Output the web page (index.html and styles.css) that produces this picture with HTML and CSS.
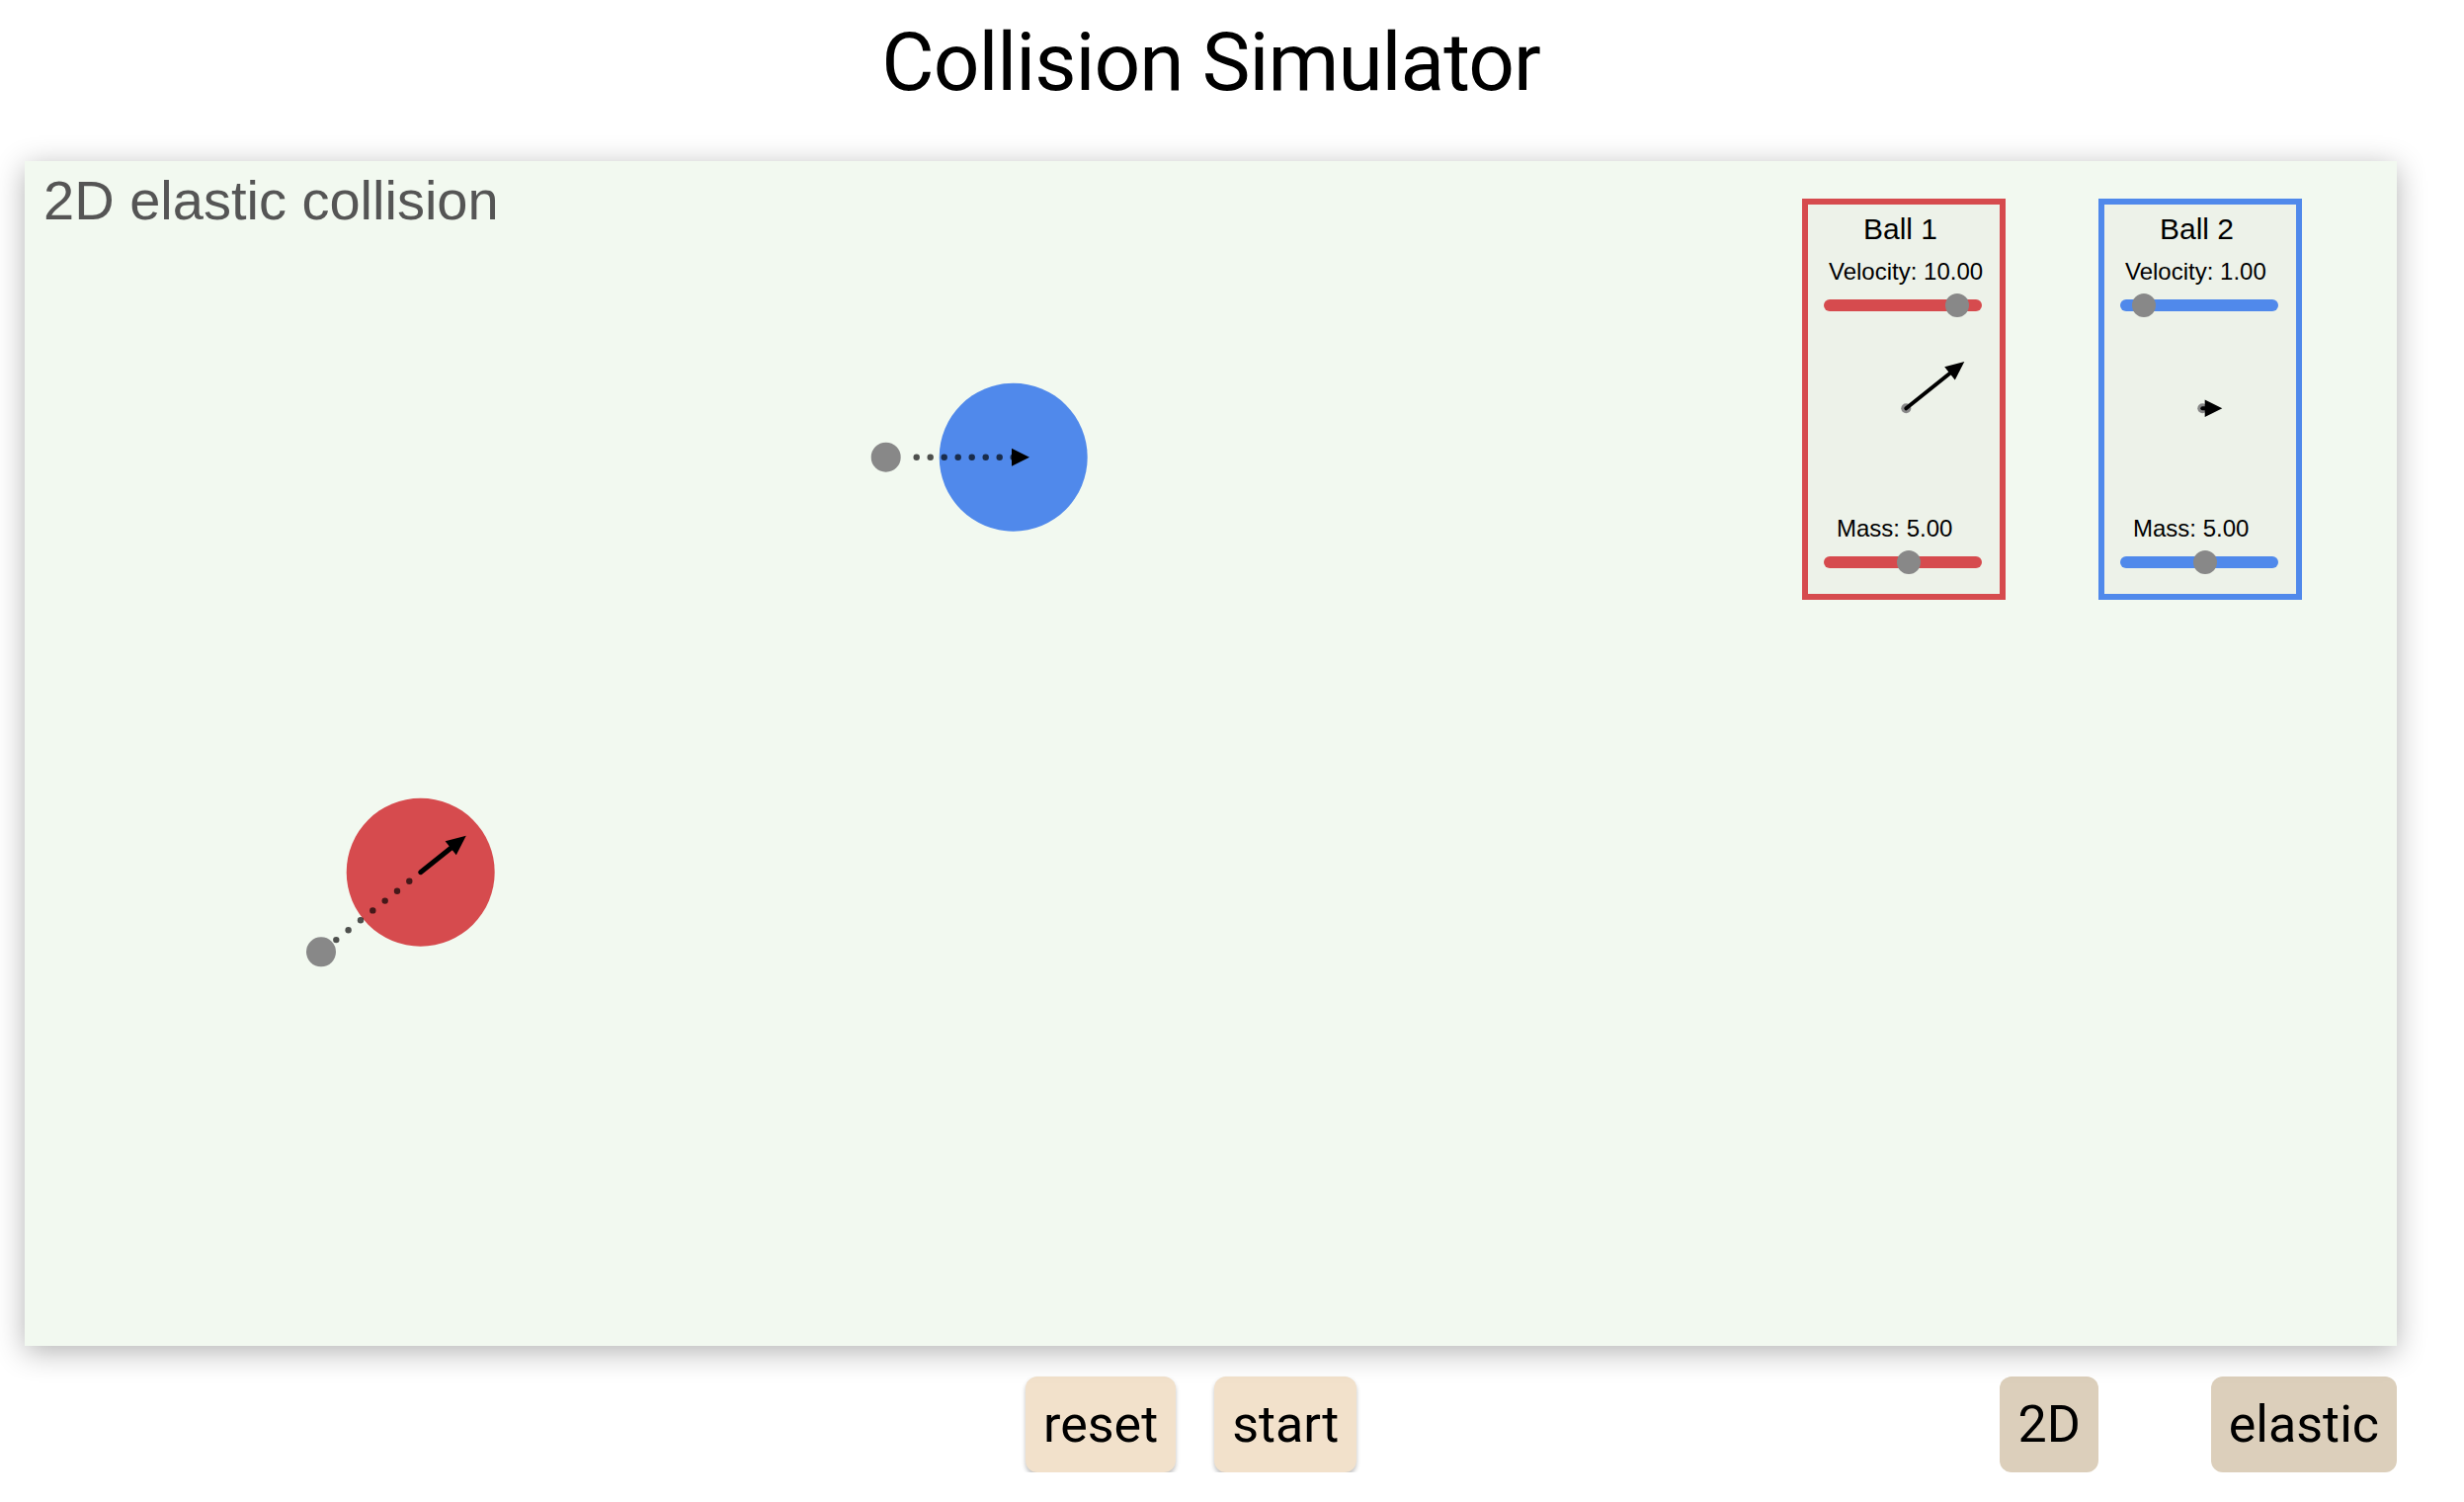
FILE: index.html
```html
<!DOCTYPE html>
<html lang="en">
<head>
<meta charset="utf-8">
<title>Collision Simulator</title>
<link rel="stylesheet" href="styles.css">
</head>
<body>
<div class="app">
  <h1 class="title">Collision Simulator</h1>
  <div class="stage">
    <svg class="scene" width="2401" height="1199" viewBox="0 0 2401 1199">
      <!-- ball 1 (red) -->
      <circle cx="300" cy="800.3" r="15" fill="#888888"/>
      <circle cx="400.7" cy="719.7" r="75" fill="#d64b4e"/>
      <g fill="rgba(0,0,0,0.68)">
        <circle cx="315.3" cy="788.1" r="3.2"/>
        <circle cx="327.6" cy="778.2" r="3.2"/>
        <circle cx="340.0" cy="768.3" r="3.2"/>
        <circle cx="352.3" cy="758.4" r="3.2"/>
        <circle cx="364.7" cy="748.6" r="3.2"/>
        <circle cx="377.0" cy="738.7" r="3.2"/>
        <circle cx="389.3" cy="728.8" r="3.2"/>
      </g>
      <line x1="400.7" y1="719.7" x2="432" y2="694.7" stroke="#000" stroke-width="5" stroke-linecap="round"/>
      <polygon points="446.8,682.8 436.8,702.3 425.6,688.3" fill="#000"/>
      <!-- ball 2 (blue) -->
      <circle cx="871.7" cy="299.7" r="15" fill="#888888"/>
      <circle cx="1000.7" cy="299.7" r="75" fill="#5089eb"/>
      <g fill="rgba(0,0,0,0.68)">
        <circle cx="902.7" cy="299.7" r="3.2"/>
        <circle cx="916.7" cy="299.7" r="3.2"/>
        <circle cx="930.7" cy="299.7" r="3.2"/>
        <circle cx="944.7" cy="299.7" r="3.2"/>
        <circle cx="958.7" cy="299.7" r="3.2"/>
        <circle cx="972.7" cy="299.7" r="3.2"/>
        <circle cx="986.7" cy="299.7" r="3.2"/>
        <circle cx="1000.7" cy="299.7" r="3.2"/>
      </g>
      <polygon points="1017,299.7 999,290.7 999,308.7" fill="#000"/>
    </svg>
    <div class="caption">2D elastic collision</div>
    <div class="panels">
      <div class="panel panel-red">
        <div class="panel-title">Ball 1</div>
        <div class="panel-label label-velocity">Velocity: 10.00</div>
        <div class="slider"><span class="thumb" style="left:135px"></span></div>
        <svg class="vector" width="194" height="206" viewBox="0 0 194 206">
          <circle cx="99.3" cy="98.3" r="5" fill="#888888"/>
          <line x1="99.3" y1="98.3" x2="144" y2="62.5" stroke="#000" stroke-width="4" stroke-linecap="round"/>
          <polygon points="158.3,51 148.8,69.5 138.2,56.3" fill="#000"/>
        </svg>
        <div class="panel-label label-mass">Mass: 5.00</div>
        <div class="slider slider-mass"><span class="thumb" style="left:85.7px"></span></div>
      </div>
      <div class="panel panel-blue">
        <div class="panel-title">Ball 2</div>
        <div class="panel-label label-velocity">Velocity: 1.00</div>
        <div class="slider"><span class="thumb" style="left:24.3px"></span></div>
        <svg class="vector" width="194" height="206" viewBox="0 0 194 206">
          <circle cx="99.3" cy="98.3" r="5" fill="#888888"/>
          <line x1="99.3" y1="98.3" x2="102" y2="98.3" stroke="#000" stroke-width="4" stroke-linecap="round"/>
          <polygon points="119.3,98.3 101.7,89.6 101.7,107" fill="#000"/>
        </svg>
        <div class="panel-label label-mass">Mass: 5.00</div>
        <div class="slider slider-mass"><span class="thumb" style="left:85.7px"></span></div>
      </div>
    </div>
  </div>
  <div class="controls">
    <div class="btn-group primary">
      <button class="btn btn-action">reset</button>
      <button class="btn btn-action">start</button>
    </div>
    <div class="btn-group mode">
      <button class="btn btn-mode">2D</button>
      <button class="btn btn-mode">elastic</button>
    </div>
  </div>
</div>
</body>
</html>
```

FILE: styles.css
```css
html, body {
  margin: 0;
  padding: 0;
  background: #ffffff;
}

body {
  font-family: Roboto, "Liberation Sans", Arial, sans-serif;
  color: #000;
}

.app {
  width: 2401px;
  margin-left: 25px;
}

.title {
  margin: 15px 0 0;
  font-family: Roboto, sans-serif;
  font-weight: 400;
  font-size: 82px;
  letter-spacing: -1px;
  line-height: 96px;
  text-align: center;
  color: #000;
}

.stage {
  position: relative;
  margin-top: 52px;
  width: 2401px;
  height: 1199px;
  background: #f2f9f0;
  box-shadow: 0 6px 28px rgba(0, 0, 0, 0.3);
  display: flex;
  align-items: flex-start;
}

.scene {
  position: absolute;
  left: 0;
  top: 0;
  display: block;
}

.caption {
  position: relative;
  margin: 7.5px 0 0 19px;
  font-family: "Liberation Sans", Arial, sans-serif;
  font-size: 56px;
  line-height: 64px;
  color: #555555;
}

.panels {
  position: relative;
  margin: 38px 96px 0 auto;
  display: flex;
  gap: 94px;
}

.panel {
  box-sizing: border-box;
  width: 206px;
  height: 406px;
  border: 6px solid;
  background: #edf2e9;
  display: flex;
  flex-direction: column;
  align-items: flex-start;
  font-family: "Liberation Sans", Arial, sans-serif;
  color: #000;
}

.panel-red {
  border-color: #d64b4e;
  --track: #d64b4e;
}

.panel-blue {
  border-color: #5089eb;
  --track: #5089eb;
}

.panel-title {
  margin: 8px 0 0 56px;
  font-size: 30px;
  line-height: 34px;
  white-space: nowrap;
}

.panel-label {
  font-size: 24px;
  line-height: 28px;
  white-space: nowrap;
}

.label-velocity {
  margin: 12.4px 0 0 21px;
}

.label-mass {
  margin: 0 0 0 29px;
}

.slider {
  position: relative;
  margin: 13.6px 0 0 16px;
  width: 160px;
  height: 12px;
  border-radius: 6px;
  background: var(--track);
}

.slider-mass {
  margin-top: 13.7px;
}

.thumb {
  position: absolute;
  top: 50%;
  width: 24px;
  height: 24px;
  margin: -12px 0 0 -12px;
  border-radius: 50%;
  background: #888888;
}

.vector {
  display: block;
}

.controls {
  margin-top: 31px;
  display: flex;
  align-items: flex-start;
}

.btn-group {
  display: flex;
}

.btn-group.primary {
  margin-left: 1013px;
  gap: 39px;
}

.btn-group.mode {
  margin-left: auto;
  gap: 114px;
}

.btn {
  font-family: Roboto, sans-serif;
  font-size: 52px;
  line-height: 61px;
  padding: 18px;
  border: none;
  border-radius: 12px;
  color: #000;
  cursor: pointer;
}

.btn-action {
  background: #f2e1cb;
  box-shadow: 0 3px 4px rgba(0, 0, 0, 0.25);
}

.btn-mode {
  background: #dccfbb;
}
```
